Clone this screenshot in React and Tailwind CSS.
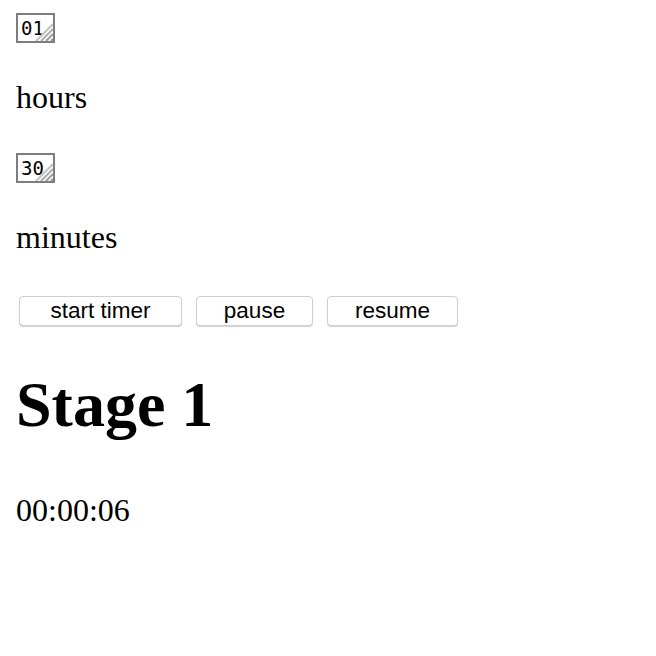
import { useState } from "react";

function Grip() {
    // textarea resize handle in the lower right corner
    return (
        <svg
            className="absolute right-0 bottom-0"
            width="18"
            height="18"
            viewBox="0 0 18 18"
        >
            <line x1="1" y1="18" x2="18" y2="1" stroke="#c4c4c4" strokeWidth="2.2" />
            <line x1="6" y1="18" x2="18" y2="6" stroke="#b0b0b0" strokeWidth="2.2" />
            <line x1="11" y1="18" x2="18" y2="11" stroke="#a0a0a0" strokeWidth="2.2" />
            <line x1="16" y1="18" x2="18" y2="16" stroke="#959595" strokeWidth="2.2" />
        </svg>
    );
}

function TimeBox({ value, className }) {
    return (
        <div
            className={`relative w-[39px] h-[30px] border-2 border-[#7d7d7d] bg-white overflow-hidden pl-[3px] pt-[2px] text-[19px] leading-[22px] text-black ${className}`}
            style={{ fontFamily: '"DejaVu Sans Mono", monospace' }}
        >
            {value}
            <Grip />
        </div>
    );
}

export default function App() {
    const [hours] = useState("01");
    const [minutes] = useState("30");
    const [elapsed] = useState("00:00:06");

    const btn =
        "h-[30px] bg-white border border-[#cfcfcf] rounded-[4px] shadow-[0_1px_1px_rgba(0,0,0,0.18)] text-[22.5px] leading-none text-black";

    return (
        <div
            className="min-h-[656px] bg-white px-4 text-black"
            style={{ fontFamily: '"Liberation Serif", serif' }}
        >
            <TimeBox value={hours} className="mt-[13px]" />
            <p className="mt-[36px] text-[32px] leading-[37px]">hours</p>

            <TimeBox value={minutes} className="mt-[37px]" />
            <p className="mt-[36px] text-[32px] leading-[37px]">minutes</p>

            {/* controls */}
            <div
                className="mt-[40px] flex gap-[14px] pl-[3px]"
                style={{ fontFamily: '"Liberation Sans", Arial, sans-serif' }}
            >
                <button className={`${btn} w-[163px]`}>start timer</button>
                <button className={`${btn} w-[117px]`}>pause</button>
                <button className={`${btn} w-[131px]`}>resume</button>
            </div>

            <h1 className="mt-[42px] text-[64px] leading-[74px] font-bold">Stage 1</h1>
            <p className="mt-[50px] text-[32px] leading-[37px]">{elapsed}</p>
        </div>
    );
}
